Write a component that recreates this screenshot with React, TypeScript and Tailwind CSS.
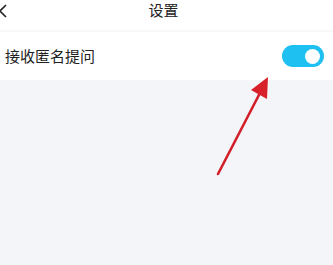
import React from 'react';

const App: React.FC = () => {
  return (
    <div className="relative w-[333px] h-[265px] overflow-hidden bg-[#f4f5f9] font-['Noto_Sans_CJK_SC',sans-serif] text-[#222]">
      {/* Header */}
      <div className="flex h-[30px] items-start bg-white">
        <svg className="-ml-[2px] mt-[4px] shrink-0" width="10" height="14" viewBox="0 0 10 14">
          <path d="M8 1 L2 7 L8 13" fill="none" stroke="#222" strokeWidth="1.6" />
        </svg>
        <div className="flex-1 pr-[14px] text-center text-[15px] leading-[20px]">设置</div>
      </div>
      <div className="h-[2px] bg-[#f8f8f9]" />

      {/* Row */}
      <div className="flex h-[48px] items-center justify-between bg-white pl-[5px] pr-[9px]">
        <span className="text-[15px] leading-[20px]">接收匿名提问</span>
        <div className="flex h-[22px] w-[42px] items-center justify-end rounded-full bg-[#1dc0f0] pr-[4px]">
          <div className="h-[15px] w-[15px] rounded-full bg-white" />
        </div>
      </div>

      {/* Annotation arrow */}
      <svg className="absolute left-0 top-0" width="333" height="265" viewBox="0 0 333 265">
        <line x1="218" y1="174" x2="261" y2="91" stroke="#d2202a" strokeWidth="2.6" strokeLinecap="round" />
        <polygon points="268,77 251,90 267,99" fill="#d8202a" />
      </svg>
    </div>
  );
};

export default App;
